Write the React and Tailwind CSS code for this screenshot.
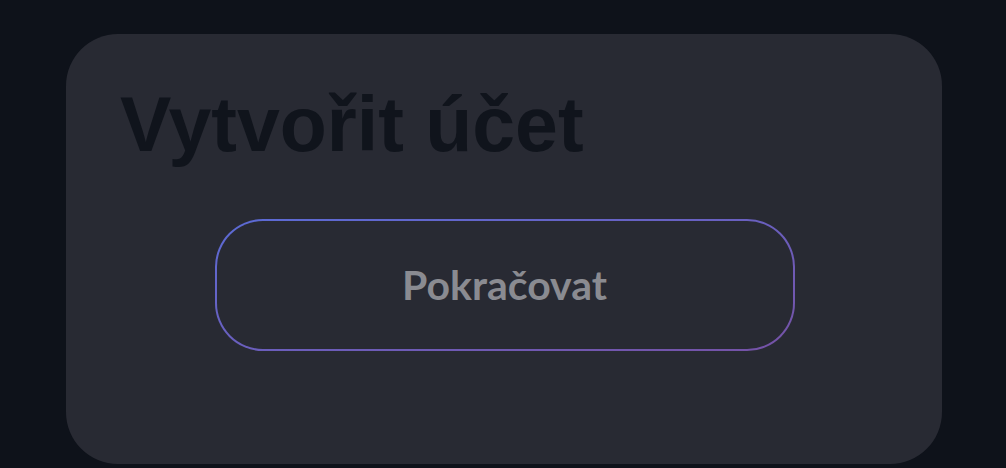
export default function App() {
  return (
    <div className="min-h-[468px] w-full bg-[#0e121a] pt-[34px] pl-[66px] pr-[64px] pb-[4px]">
      <div className="h-[430px] rounded-[52px] bg-[#282a33] pl-[54px] pr-[54px] pt-[52px]">
        <h1
          className="text-[77px] leading-none font-bold text-[#10141c]"
          style={{ fontFamily: '"Liberation Sans", Arial, sans-serif' }}
        >
          Vytvořit účet
        </h1>
        <div className="mt-[56px] flex justify-center pl-[1px]">
          <button className="w-[580px] h-[132px] rounded-[48px] p-[2px] bg-gradient-to-br from-[#5b6bd6] to-[#7552a6]">
            <span
              className="flex h-full w-full items-center justify-center rounded-[46px] bg-[#282a33] text-[41px] font-bold text-[#8a8b91]"
              style={{ fontFamily: 'Lato, "Noto Sans", sans-serif' }}
            >
              Pokračovat
            </span>
          </button>
        </div>
      </div>
    </div>
  );
}
